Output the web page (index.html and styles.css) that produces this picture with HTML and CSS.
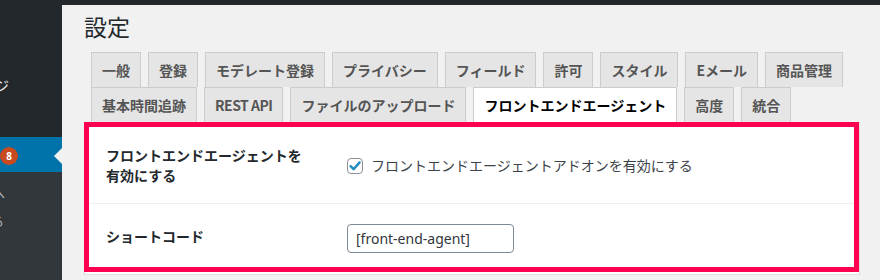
FILE: index.html
```html
<!DOCTYPE html>
<html lang="ja">
<head>
<meta charset="utf-8">
<title>設定</title>
<link rel="stylesheet" href="styles.css">
</head>
<body>
<div class="topbar"></div>
<div class="layout">
  <nav class="sidebar">
    <div class="menu-top">
      <div class="menu-item"><span class="cut cut-ji">ジ</span></div>
    </div>
    <div class="menu-current">
      <span class="badge">8</span>
      <span class="arrow"></span>
    </div>
    <div class="submenu">
      <div class="sub-item"><span class="cut cut-he">へ</span></div>
      <div class="sub-item"><span class="cut cut-ru">る</span></div>
    </div>
  </nav>
  <main class="main">
    <div class="wrap">
      <h1 class="title">設定</h1>
      <div class="tabs">
        <a class="tab">一般</a>
        <a class="tab">登録</a>
        <a class="tab">モデレート登録</a>
        <a class="tab">プライバシー</a>
        <a class="tab">フィールド</a>
        <a class="tab">許可</a>
        <a class="tab">スタイル</a>
        <a class="tab">Eメール</a>
        <a class="tab">商品管理</a>
        <a class="tab">基本時間追跡</a>
        <a class="tab tab-latin">REST API</a>
        <a class="tab">ファイルのアップロード</a>
        <a class="tab tab-active">フロントエンドエージェント</a>
        <a class="tab">高度</a>
        <a class="tab">統合</a>
      </div>
      <div class="panel">
        <div class="highlight">
          <div class="row row-first">
            <div class="th">フロントエンドエージェントを有効にする</div>
            <div class="td">
              <label class="check-label">
                <span class="checkbox">
                  <svg width="16" height="16" viewBox="0 0 16 16"><path d="M3.6 8.2 L6.6 11.2 L12.6 4.4" fill="none" stroke="#1e8cbe" stroke-width="2.4" stroke-linecap="round" stroke-linejoin="round"/></svg>
                </span>
                <span class="check-text">フロントエンドエージェントアドオンを有効にする</span>
              </label>
            </div>
          </div>
          <div class="row row-second">
            <div class="th">ショートコード</div>
            <div class="td">
              <span class="input">[front-end-agent]</span>
            </div>
          </div>
        </div>
        <div class="panel-next"></div>
      </div>
    </div>
  </main>
</div>
</body>
</html>
```

FILE: styles.css
```css
html, body {
  margin: 0;
  padding: 0;
  height: 280px;
  overflow: hidden;
  background: #f1f1f1;
  font-family: "Noto Sans", "Noto Sans CJK JP", sans-serif;
}

.topbar {
  height: 5px;
  background: #23282d;
}

.layout {
  display: flex;
  height: 275px;
}

.sidebar {
  width: 62px;
  flex: 0 0 62px;
  background: #32373c;
  display: flex;
  flex-direction: column;
  overflow: hidden;
}

.menu-top {
  height: 132px;
  background: #23282d;
  padding-top: 71px;
  box-sizing: border-box;
}

.menu-item {
  height: 18px;
  line-height: 18px;
  font-size: 14px;
  color: #eeeeee;
  font-family: "Noto Sans CJK JP", sans-serif;
  overflow: hidden;
  white-space: nowrap;
}

.cut {
  display: inline-block;
}

.cut-ji { margin-left: -5px; }
.cut-he { margin-left: -8px; }
.cut-ru { margin-left: -9px; }

.menu-current {
  position: relative;
  height: 35px;
  background: #0073aa;
  display: flex;
  align-items: center;
}

.badge {
  width: 18px;
  height: 18px;
  border-radius: 50%;
  background: #ca4a1f;
  color: #fff;
  font-size: 10px;
  font-weight: 700;
  line-height: 18px;
  text-align: center;
  margin-top: 2px;
}

.arrow {
  position: absolute;
  right: 0;
  top: 50%;
  margin-top: -7px;
  width: 0;
  height: 0;
  border: 8px solid transparent;
  border-left-width: 0;
  border-right-color: #f1f1f1;
}

.submenu {
  padding-top: 7px;
}

.sub-item {
  height: 28px;
  line-height: 28px;
  font-size: 13px;
  color: #b4b9be;
  font-family: "Noto Sans CJK JP", sans-serif;
  overflow: hidden;
  white-space: nowrap;
}

.main {
  flex: 1;
  min-width: 0;
}

.wrap {
  margin-left: 22px;
  width: 776px;
}

.title {
  margin: 0;
  padding-top: 6px;
  font-size: 23px;
  font-weight: 400;
  line-height: 30px;
  color: #23282d;
  font-family: "Noto Sans CJK JP", sans-serif;
}

.tabs {
  display: flex;
  flex-wrap: wrap;
  margin-top: 11px;
}

.tab {
  display: block;
  margin-left: 7px;
  padding: 5px 10px;
  font-size: 14px;
  line-height: 24px;
  font-weight: 700;
  color: #555555;
  background: #e5e5e5;
  border: 1px solid #cccccc;
  border-bottom: none;
  white-space: nowrap;
  font-family: "Noto Sans CJK JP", sans-serif;
}

.tab-latin {
  letter-spacing: -0.5px;
}

.tab-active {
  background: #ffffff;
  color: #000000;
}

.panel {
  background: #ffffff;
  border-left: 1px solid #dddddd;
  border-right: 1px solid #dddddd;
}

.highlight {
  margin-left: -1px;
  border: 5px solid #ff0050;
  background: #ffffff;
}

.row {
  display: flex;
  align-items: center;
  box-sizing: border-box;
}

.row-first {
  height: 77px;
  border-bottom: 1px solid #eeeeee;
}

.row-second {
  height: 63px;
}

.th {
  width: 200px;
  padding-left: 17px;
  padding-right: 41px;
  font-size: 14px;
  line-height: 20px;
  font-weight: 700;
  color: #23282d;
  font-family: "Noto Sans CJK JP", sans-serif;
}

.td {
  flex: 1;
}

.check-label {
  display: flex;
  align-items: center;
}

.checkbox {
  width: 14px;
  height: 14px;
  border: 1px solid #8c8f94;
  border-radius: 4px;
  background: #ffffff;
  display: flex;
  align-items: center;
  justify-content: center;
  margin-top: 2px;
}

.checkbox svg {
  display: block;
  flex: 0 0 16px;
}

.check-text {
  margin-left: 8px;
  font-size: 14px;
  line-height: 20px;
  color: #3c434a;
  font-family: "Noto Sans CJK JP", sans-serif;
}

.input {
  display: block;
  width: 167px;
  height: 29px;
  box-sizing: border-box;
  border: 1px solid #7e8993;
  border-radius: 4px;
  padding: 0 8px;
  margin-top: 6px;
  font-size: 14px;
  line-height: 27px;
  color: #32373c;
  font-family: "Noto Sans", sans-serif;
  background: #ffffff;
}

.panel-next {
  height: 2px;
  border-bottom: 1px solid #e1e1e1;
}
```
